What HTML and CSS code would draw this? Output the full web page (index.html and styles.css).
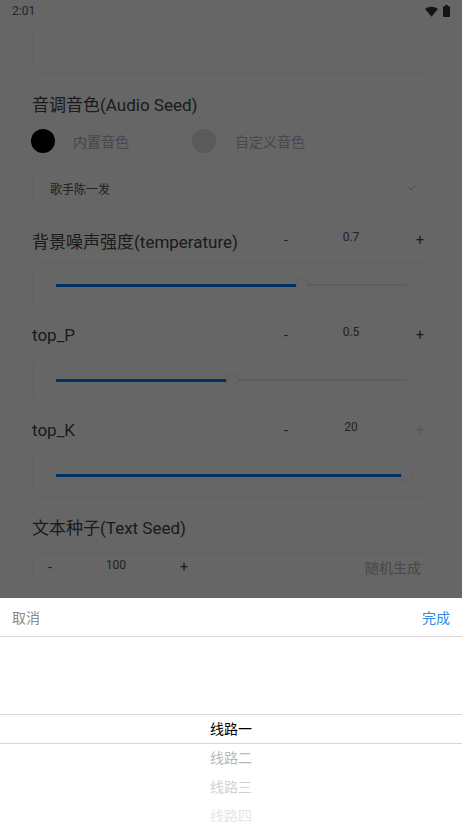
FILE: index.html
```html
<!DOCTYPE html>
<html lang="zh-CN">
<head>
    <meta charset="UTF-8">
    <meta name="viewport" content="width=device-width, initial-scale=1.0">
    <title>语音设置</title>
    <link rel="stylesheet" href="styles.css">
</head>
<body>
    <div class="status-bar">
        <span class="time">2:01</span>
        <span class="status-icons">
            <svg class="wifi" viewBox="0 0 24 20" width="13" height="11"><path d="M12 19.5L23.8 5.2C20.6 2.6 16.5 1 12 1S3.4 2.6.2 5.2z"/></svg>
            <svg class="battery" viewBox="0 0 7 12" width="7" height="12"><rect x="2" y="0" width="3" height="1.5"/><rect x="0" y="1.2" width="7" height="10.8" rx="1"/></svg>
        </span>
    </div>

    <div class="page">
        <div class="card text-card"></div>

        <div class="section-title">音调音色(Audio Seed)</div>
        <div class="radio-row">
            <div class="radio">
                <span class="dot checked"></span>
                <span class="radio-label">内置音色</span>
            </div>
            <div class="radio">
                <span class="dot"></span>
                <span class="radio-label">自定义音色</span>
            </div>
        </div>
        <div class="card select-card">
            <span>歌手陈一发</span>
            <svg class="chevron" viewBox="0 0 10 6" width="10" height="6"><path d="M1 1l4 4 4-4"/></svg>
        </div>

        <div class="param">
            <div class="param-head">
                <span class="param-name">背景噪声强度(temperature)</span>
                <span class="step minus">-</span>
                <span class="value">0.7</span>
                <span class="step plus">+</span>
            </div>
            <div class="card slider-card">
                <div class="track">
                    <div class="fill" style="width: 70%"></div>
                    <span class="thumb" style="left: 70%"></span>
                </div>
            </div>
        </div>

        <div class="param">
            <div class="param-head">
                <span class="param-name">top_P</span>
                <span class="step minus">-</span>
                <span class="value">0.5</span>
                <span class="step plus">+</span>
            </div>
            <div class="card slider-card">
                <div class="track">
                    <div class="fill" style="width: 50%"></div>
                    <span class="thumb" style="left: 50%"></span>
                </div>
            </div>
        </div>

        <div class="param">
            <div class="param-head">
                <span class="param-name">top_K</span>
                <span class="step minus">-</span>
                <span class="value">20</span>
                <span class="step plus disabled">+</span>
            </div>
            <div class="card slider-card">
                <div class="track">
                    <div class="fill" style="width: 100%"></div>
                    <span class="thumb" style="left: 100%"></span>
                </div>
            </div>
        </div>

        <div class="section-title seed-title">文本种子(Text Seed)</div>
        <div class="card seed-card">
            <span class="seed-step">-</span>
            <span class="seed-value">100</span>
            <span class="seed-step seed-plus">+</span>
            <span class="random">随机生成</span>
        </div>
    </div>

    <div class="mask"></div>
    <div class="sheet">
        <div class="sheet-head">
            <span class="cancel">取消</span>
            <span class="confirm">完成</span>
        </div>
        <div class="picker">
            <div class="indicator"></div>
            <div class="picker-list">
                <div class="picker-item selected">线路一</div>
                <div class="picker-item far1">线路二</div>
                <div class="picker-item far2">线路三</div>
                <div class="picker-item far3">线路四</div>
            </div>
        </div>
    </div>
</body>
</html>
```

FILE: styles.css
```css
body {
    margin: 0;
    padding: 0;
    font-family: Roboto, "Noto Sans CJK SC", sans-serif;
    background-color: #ffffff;
    color: #444;
    height: 822px;
    overflow: hidden;
}
.status-bar {
    height: 24px;
    display: flex;
    align-items: center;
    justify-content: space-between;
    padding: 0 12px 2px 12px;
    box-sizing: border-box;
}
.time {
    font-size: 12px;
    color: #606060;
}
.status-icons {
    display: flex;
    align-items: center;
    gap: 5px;
}
.status-icons svg {
    fill: #333;
}
.page {
    padding: 4px 31px 0 32px;
}
.card {
    background: #fff;
    border: 1px solid #f6f6f6;
    border-radius: 6px;
    box-sizing: border-box;
}
.text-card {
    height: 45px;
}
.section-title {
    font-size: 17px;
    line-height: 34px;
    margin-top: 15px;
    color: #444;
}
.radio-row {
    display: flex;
    margin-top: 7px;
    height: 24px;
}
.radio {
    display: flex;
    align-items: center;
    width: 161px;
    margin-left: -1px;
}
.radio + .radio {
    margin-left: 0;
}
.dot {
    width: 24px;
    height: 24px;
    border-radius: 50%;
    background: #e0e0e0;
    margin-right: 19px;
}
.dot.checked {
    background: #000;
    margin-right: 18px;
}
.radio-label {
    font-size: 14px;
    color: #aeb0be;
}
.select-card {
    height: 38px;
    margin-top: 16px;
    display: flex;
    align-items: center;
    justify-content: space-between;
    padding: 0 14px 0 17px;
    font-size: 12px;
    color: #555;
}
.chevron {
    fill: none;
    stroke: #bbb;
    stroke-width: 1;
}
.param {
    margin-top: 13px;
    padding-bottom: 8px;
}
.param + .param {
    margin-top: 0;
}
.param-head {
    height: 40px;
    display: flex;
    align-items: center;
}
.param-name {
    flex: 1;
    font-size: 17px;
    color: #444;
}
.step {
    width: 30px;
    text-align: center;
    font-size: 14px;
    color: #444;
}
.plus {
    width: 22px;
    margin-left: 8px;
}
.step.disabled {
    color: #ddd;
}
.value {
    width: 100px;
    text-align: center;
    font-size: 12px;
    color: #555;
    margin-bottom: 6px;
}
.slider-card {
    height: 44px;
    margin-top: 3px;
    display: flex;
    align-items: center;
    padding: 0 23px;
}
.track {
    flex: 1;
    height: 2px;
    background: #ebebeb;
    position: relative;
}
.fill {
    height: 3px;
    margin-top: -0.5px;
    background: #007aff;
}
.thumb {
    position: absolute;
    top: 50%;
    width: 12px;
    height: 12px;
    margin: -6px 0 0 -6px;
    border-radius: 50%;
    background: #fff;
    box-shadow: 0 0 2px rgba(0, 0, 0, 0.2);
}
.seed-title {
    margin-top: 3px;
    line-height: 40px;
}
.seed-card {
    height: 30px;
    margin-top: 4px;
    display: flex;
    align-items: center;
    padding: 0 9px 0 3px;
    font-size: 12px;
    color: #555;
}
.seed-step {
    width: 28px;
    text-align: center;
    font-size: 14px;
    color: #444;
}
.seed-plus {
    width: 32px;
}
.seed-value {
    width: 104px;
    text-align: center;
    margin-bottom: 4px;
}
.random {
    margin-left: auto;
    font-size: 14px;
    color: #b4b4b4;
}
.mask {
    position: fixed;
    top: 0;
    left: 0;
    right: 0;
    bottom: 0;
    background: rgba(0, 0, 0, 0.6);
}
.sheet {
    position: fixed;
    left: 0;
    right: 0;
    bottom: 0;
    height: 224px;
    background: #fff;
    overflow: hidden;
}
.sheet-head {
    height: 38px;
    display: flex;
    align-items: center;
    justify-content: space-between;
    padding: 0 12px;
    font-size: 14px;
    border-bottom: 1px solid #d6d6d6;
}
.cancel {
    color: #888;
}
.confirm {
    color: #2f8ae8;
}
.picker {
    position: relative;
    height: 185px;
    overflow: hidden;
}
.indicator {
    position: absolute;
    left: 0;
    right: 0;
    top: 77px;
    height: 28px;
    border-top: 1px solid #d6d6d6;
    border-bottom: 1px solid #d6d6d6;
}
.picker-list {
    padding-top: 78px;
}
.picker-item {
    height: 29px;
    line-height: 29px;
    text-align: center;
    font-size: 14px;
    color: #000;
}
.far1 {
    color: #b8b8b8;
}
.far2 {
    color: #d2d2d2;
}
.far3 {
    color: #e6e6e6;
}
```
